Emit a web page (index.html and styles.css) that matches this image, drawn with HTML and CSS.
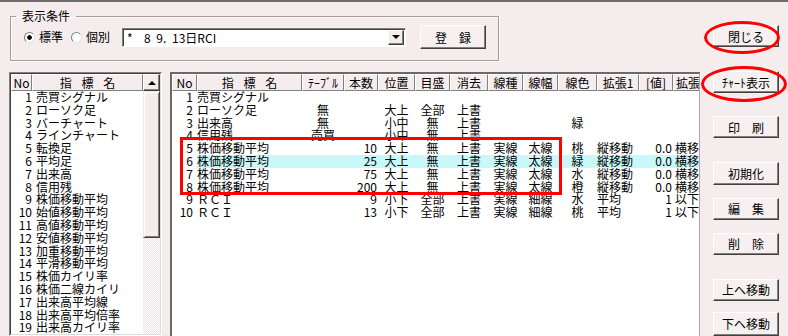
FILE: index.html
```html
<!DOCTYPE html>
<html lang="ja">
<head>
    <meta charset="UTF-8">
    <meta name="viewport" content="width=device-width, initial-scale=1.0">
    <link rel="stylesheet" href="styles.css">
    <title>指標設定</title>
</head>
<body>
<div class="window">
    <div class="main">
        <fieldset class="cond">
            <legend>表示条件</legend>
            <div class="cond-row">
                <label class="radio first"><span class="dot on"></span>標準</label>
                <label class="radio"><span class="dot"></span>個別</label>
                <div class="combo">
                    <span class="combo-text">*  8 9. 13日RCI</span>
                    <span class="combo-btn"><i class="tri-down"></i></span>
                </div>
                <button class="btn reg">登　録</button>
            </div>
        </fieldset>

        <div class="lists">
            <div class="ilist">
                <div class="ilist-in">
                    <div class="ilist-body">
                        <div class="ihead"><span class="h-no">No</span><span class="h-name spaced">指 標 名</span></div>
                        <div class="irow"><span class="no">1</span><span class="nm">売買シグナル</span></div>
                        <div class="irow"><span class="no">2</span><span class="nm">ローソク足</span></div>
                        <div class="irow"><span class="no">3</span><span class="nm">バーチャート</span></div>
                        <div class="irow"><span class="no">4</span><span class="nm">ラインチャート</span></div>
                        <div class="irow"><span class="no">5</span><span class="nm">転換足</span></div>
                        <div class="irow"><span class="no">6</span><span class="nm">平均足</span></div>
                        <div class="irow"><span class="no">7</span><span class="nm">出来高</span></div>
                        <div class="irow"><span class="no">8</span><span class="nm">信用残</span></div>
                        <div class="irow"><span class="no">9</span><span class="nm">株価移動平均</span></div>
                        <div class="irow"><span class="no">10</span><span class="nm">始値移動平均</span></div>
                        <div class="irow"><span class="no">11</span><span class="nm">高値移動平均</span></div>
                        <div class="irow"><span class="no">12</span><span class="nm">安値移動平均</span></div>
                        <div class="irow"><span class="no">13</span><span class="nm">加重移動平均</span></div>
                        <div class="irow"><span class="no">14</span><span class="nm">平滑移動平均</span></div>
                        <div class="irow"><span class="no">15</span><span class="nm">株価カイリ率</span></div>
                        <div class="irow"><span class="no">16</span><span class="nm">株価二線カイリ</span></div>
                        <div class="irow"><span class="no">17</span><span class="nm">出来高平均線</span></div>
                        <div class="irow"><span class="no">18</span><span class="nm">出来高平均倍率</span></div>
                        <div class="irow"><span class="no">19</span><span class="nm">出来高カイリ率</span></div>
                    </div>
                    <div class="vscroll">
                        <span class="sb-up"><i class="tri-up"></i></span>
                        <span class="sb-thumb"></span>
                        <span class="sb-track"></span>
                    </div>
                </div>
            </div>

            <div class="grid">
                <div class="grow ghead">
                    <span>No</span><span class="spaced">指 標 名</span><span>ﾃｰﾌﾞﾙ</span><span>本数</span><span>位置</span><span>目盛</span><span>消去</span><span>線種</span><span>線幅</span><span>線色</span><span>拡張1</span><span>[値]</span><span class="l ext">拡張2</span>
                </div>
                <div class="grow"><span class="r no">1</span><span class="l">売買シグナル</span><span></span><span></span><span></span><span></span><span></span><span></span><span></span><span></span><span></span><span></span><span></span></div>
                <div class="grow"><span class="r no">2</span><span class="l">ローソク足</span><span>無</span><span></span><span>大上</span><span>全部</span><span>上書</span><span></span><span></span><span></span><span></span><span></span><span></span></div>
                <div class="grow"><span class="r no">3</span><span class="l">出来高</span><span>無</span><span></span><span>小中</span><span>無</span><span>上書</span><span></span><span></span><span>緑</span><span></span><span></span><span></span></div>
                <div class="grow"><span class="r no">4</span><span class="l">信用残</span><span>売買</span><span></span><span>小中</span><span>無</span><span>上書</span><span></span><span></span><span></span><span></span><span></span><span></span></div>
                <div class="grow"><span class="r no">5</span><span class="l">株価移動平均</span><span></span><span class="r">10</span><span>大上</span><span>無</span><span>上書</span><span>実線</span><span>太線</span><span>桃</span><span class="l">縦移動</span><span class="r">0.0</span><span class="l ext">横移動</span></div>
                <div class="grow sel"><span class="r no">6</span><span class="l">株価移動平均</span><span></span><span class="r">25</span><span>大上</span><span>無</span><span>上書</span><span>実線</span><span>太線</span><span>緑</span><span class="l">縦移動</span><span class="r">0.0</span><span class="l ext">横移動</span></div>
                <div class="grow"><span class="r no">7</span><span class="l">株価移動平均</span><span></span><span class="r">75</span><span>大上</span><span>無</span><span>上書</span><span>実線</span><span>太線</span><span>水</span><span class="l">縦移動</span><span class="r">0.0</span><span class="l ext">横移動</span></div>
                <div class="grow"><span class="r no">8</span><span class="l">株価移動平均</span><span></span><span class="r">200</span><span>大上</span><span>無</span><span>上書</span><span>実線</span><span>太線</span><span>橙</span><span class="l">縦移動</span><span class="r">0.0</span><span class="l ext">横移動</span></div>
                <div class="grow"><span class="r no">9</span><span class="l">ＲＣＩ</span><span></span><span class="r">9</span><span>小下</span><span>全部</span><span>上書</span><span>実線</span><span>細線</span><span>水</span><span class="l">平均</span><span class="r">1</span><span class="l ext">以下</span></div>
                <div class="grow"><span class="r no">10</span><span class="l">ＲＣＩ</span><span></span><span class="r">13</span><span>小下</span><span>全部</span><span>上書</span><span>実線</span><span>細線</span><span>桃</span><span class="l">平均</span><span class="r">1</span><span class="l ext">以下</span></div>
                <div class="mark"></div>
            </div>
        </div>
    </div>

    <div class="side">
        <button class="btn b-close">閉じる</button>
        <button class="btn b-chart">ﾁｬｰﾄ表示</button>
        <button class="btn b-print">印　刷</button>
        <button class="btn b-init">初期化</button>
        <button class="btn b-edit">編　集</button>
        <button class="btn b-del">削　除</button>
        <button class="btn b-up">上へ移動</button>
        <button class="btn b-down">下へ移動</button>
    </div>

    <div class="ring ring-close"></div>
    <div class="ring ring-chart"></div>
</div>
</body>
</html>
```

FILE: styles.css
```css
body {
    margin: 0;
    background-color: #f5eded;
    font-family: "Noto Sans CJK JP", "DejaVu Sans", sans-serif;
    font-size: 12px;
    color: #000;
    overflow: hidden;
}

.window {
    position: relative;
    display: flex;
    height: 334px;
    border-top: 2px solid #6e6e6e;
    overflow: hidden;
}

.main {
    width: 700px;
    display: flex;
    flex-direction: column;
}

.spaced {
    word-spacing: 7px;
}

/* group box */
.cond {
    margin: 7px 0 0 10px;
    width: 489px;
    box-sizing: border-box;
    padding: 2px 0 11px 13px;
    border: 1px solid #a59c9c;
    box-shadow: 1px 1px 0 #fff, inset 1px 1px 0 #fff;
}
.cond legend {
    margin-left: -8px;
    padding: 0 6px;
    line-height: 14px;
}
.cond-row {
    display: flex;
    align-items: center;
    height: 24px;
}
.radio {
    display: flex;
    align-items: center;
    gap: 4px;
    line-height: 14px;
}
.radio.first {
    margin-right: 8px;
}
.dot {
    width: 11px;
    height: 11px;
    box-sizing: border-box;
    border-radius: 50%;
    background-color: #fff;
    border: 1px solid;
    border-color: #808080 #e8e0e0 #e8e0e0 #808080;
}
.dot.on {
    background: radial-gradient(circle, #000 0 2px, #fff 2.5px);
}

.combo {
    margin-left: 12px;
    width: 284px;
    height: 19px;
    box-sizing: border-box;
    display: flex;
    align-items: center;
    background-color: #fff;
    border: 1px solid;
    border-color: #808080 #fff #fff #808080;
    box-shadow: inset 1px 1px 0 #404040;
}
.combo-text {
    padding-left: 4px;
    white-space: pre;
    word-spacing: 3px;
    line-height: 15px;
}
.combo-btn {
    margin-left: auto;
    margin-right: 1px;
    width: 16px;
    height: 15px;
    box-sizing: border-box;
    display: flex;
    justify-content: center;
    align-items: center;
    background-color: #f5eded;
    border: 1px solid;
    border-color: #fff #404040 #404040 #fff;
    box-shadow: inset -1px -1px 0 #808080;
}
.tri-down {
    border-left: 4px solid transparent;
    border-right: 4px solid transparent;
    border-top: 4px solid #000;
}
.tri-up {
    border-left: 4px solid transparent;
    border-right: 4px solid transparent;
    border-bottom: 4px solid #000;
}

.btn {
    width: 66px;
    height: 24px;
    padding: 0;
    font-family: inherit;
    font-size: 12px;
    color: #000;
    background-color: #f6f0f0;
    border: 1px solid;
    border-color: #fff #404040 #404040 #fff;
    box-shadow: inset -1px -1px 0 #808080;
}
.reg {
    margin-left: 14px;
}

/* lists */
.lists {
    margin-top: 11px;
    display: flex;
    height: 264px;
}

.ilist {
    margin-left: 9px;
    width: 153px;
    box-sizing: border-box;
    border: 1px solid;
    border-color: #808080 #fff #fff #808080;
}
.ilist-in {
    display: flex;
    height: 100%;
    box-sizing: border-box;
    border: 1px solid;
    border-color: #404040 #ddd #ddd #404040;
}
.ilist-body {
    flex: 1;
    background-color: #fff;
    overflow: hidden;
}
.ihead {
    display: flex;
    height: 17px;
    line-height: 15px;
}
.ihead span {
    box-sizing: border-box;
    text-align: center;
    background-color: #f5eded;
    border: 1px solid;
    border-color: #fff #808080 #808080 #fff;
}
.h-no {
    width: 21px;
}
.h-name {
    flex: 1;
}
.irow {
    display: flex;
    height: 12.8px;
    line-height: 12.8px;
    white-space: nowrap;
}
.irow .no {
    width: 21px;
    text-align: right;
}
.irow .nm {
    padding-left: 4px;
}

.vscroll {
    width: 17px;
    display: flex;
    flex-direction: column;
}
.sb-up {
    height: 17px;
    box-sizing: border-box;
    display: flex;
    justify-content: center;
    align-items: center;
    background-color: #f5eded;
    border: 1px solid;
    border-color: #fff #404040 #404040 #fff;
    box-shadow: inset -1px -1px 0 #808080;
}
.sb-thumb {
    height: 147px;
    box-sizing: border-box;
    background-color: #f5eded;
    border: 1px solid;
    border-color: #f0e8e8 #404040 #404040 #f0e8e8;
    box-shadow: inset 1px 1px 0 #fff, inset -1px -1px 0 #808080;
}
.sb-track {
    flex: 1;
    background: repeating-conic-gradient(#fff 0 25%, #efe3e3 0 50%) 0 0 / 2px 2px;
}

/* main grid */
.grid {
    position: relative;
    margin-left: 8px;
    width: 530px;
    box-sizing: border-box;
    background-color: #fff;
    border-left: 2px solid #6a6a6a;
    border-top: 2px solid #6a6a6a;
    border-right: 1px solid #b0a8a8;
    overflow: hidden;
}
.grow {
    display: grid;
    grid-template-columns: 25px 105px 42px 34px 37px 35px 38px 35px 35px 39px 42px 34px 50px;
    width: 551px;
    height: 12.8px;
    line-height: 12.8px;
    white-space: nowrap;
}
.grow span {
    text-align: center;
}
.grow .l {
    text-align: left;
}
.grow .r {
    text-align: right;
    padding-right: 1px;
}
.grow .no {
    padding-right: 4px;
}
.grow .ext {
    padding-left: 2px;
}
.grow.sel span {
    background-color: #c9f8f8;
}
.grow.sel span.no {
    background-color: #fff;
}

.ghead {
    height: 17px;
    line-height: 15px;
}
.ghead span {
    box-sizing: border-box;
    background-color: #f5eded;
    border: 1px solid;
    border-color: #fff #808080 #808080 #fff;
}

.mark {
    position: absolute;
    left: 8px;
    top: 63px;
    width: 382px;
    height: 58px;
    box-sizing: border-box;
    border: 3px solid #ff0000;
}

/* right buttons */
.side {
    margin-left: 13px;
    width: 66px;
    display: flex;
    flex-direction: column;
}
.b-close { margin-top: 23px; }
.b-chart { margin-top: 24px; }
.b-print { margin-top: 23px; }
.b-init { margin-top: 24px; }
.b-edit { margin-top: 13px; }
.b-del { margin-top: 13px; }
.b-up { margin-top: 24px; }
.b-down { margin-top: 11px; flex-shrink: 0; }

.ring {
    position: absolute;
    box-sizing: border-box;
    border: 3px solid #ff0000;
    border-radius: 50%;
}
.ring-close {
    left: 704px;
    top: 19px;
    width: 76px;
    height: 33px;
}
.ring-chart {
    left: 701px;
    top: 64px;
    width: 86px;
    height: 36px;
}
```
